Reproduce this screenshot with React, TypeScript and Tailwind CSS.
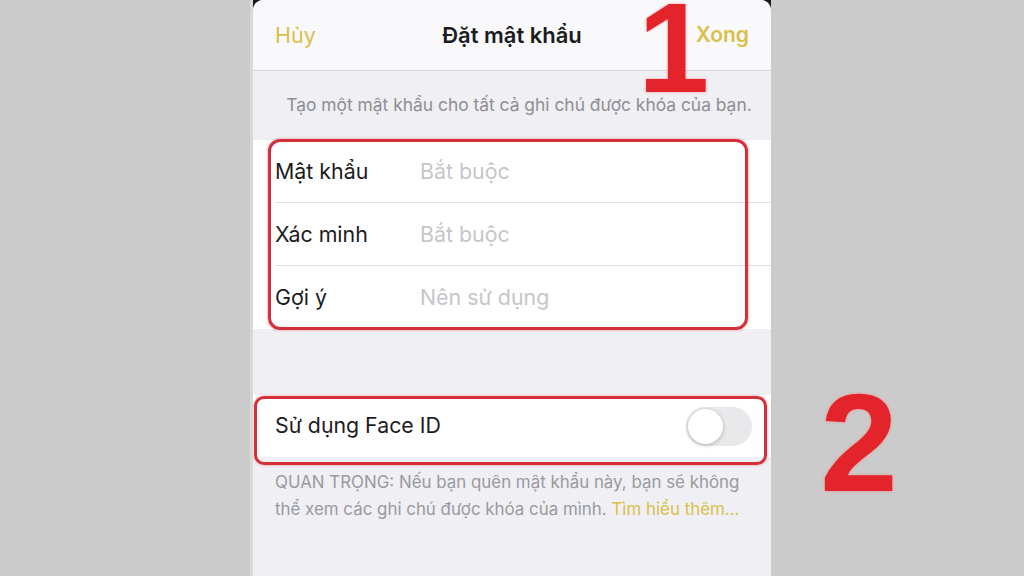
export default function App() {
  return (
    <div
      className="relative flex h-[576px] w-[1024px] overflow-hidden bg-[#cbcbcb]"
      style={{ fontFamily: 'Inter, "Noto Sans", sans-serif' }}
    >
      {/* left gray */}
      <div className="w-[250px] bg-[#cbcbcb]" />
      <div className="w-[3px] bg-[#d9d9d9]" />

      {/* phone screen */}
      <div className="w-[518px] bg-[#1a1a1a]">
        <div className="flex h-full flex-col overflow-hidden rounded-t-[10px] bg-[#efeff4]">
          {/* nav bar */}
          <div className="grid h-[71px] shrink-0 grid-cols-[1fr_auto_1fr] items-center border-b border-[#d5d5da] bg-[#f9f9fb] px-[22px]">
            <span className="text-[21.5px] text-[#d9c04a]">Hủy</span>
            <span className="text-[22px] font-semibold text-[#1c1c1e]">Đặt mật khẩu</span>
            <span className="text-right text-[21px] font-semibold text-[#d9c04a]">Xong</span>
          </div>

          {/* description */}
          <div className="flex h-[69px] shrink-0 items-center justify-center pl-[14px] text-[17.4px] text-[#8e8e93]">
            Tạo một mật khẩu cho tất cả ghi chú được khóa của bạn.
          </div>

          {/* password group */}
          <div className="relative shrink-0 bg-white">
            <Row label="Mật khẩu" placeholder="Bắt buộc" divider />
            <Row label="Xác minh" placeholder="Bắt buộc" divider />
            <Row label="Gợi ý" placeholder="Nên sử dụng" />
            <div className="absolute left-[15px] right-[23px] top-[-1px] bottom-[-1px] rounded-[12px] border-[3.5px] border-[#d3303a] shadow-[0_0_3px_rgba(230,80,90,0.6)]" />
          </div>

          <div className="h-[66px] shrink-0" />

          {/* face id */}
          <div className="relative flex h-[62px] shrink-0 items-center justify-between bg-white pl-[22px] pr-[19px]">
            <span className="text-[21.3px] text-[#1c1c1e]">Sử dụng Face ID</span>
            <div className="flex h-[39px] w-[66px] items-center rounded-full bg-[#e9e9eb] p-[2px]">
              <div className="h-[35px] w-[35px] rounded-full bg-white shadow-[0_1px_4px_rgba(0,0,0,0.25)]" />
            </div>
            <div className="absolute left-[1px] right-[4px] top-[1px] bottom-[-8px] rounded-[10px] border-[3.5px] border-[#d3303a] shadow-[0_0_3px_rgba(230,80,90,0.6)]" />
          </div>

          {/* footer */}
          <div className="px-[22px] pt-[12px] text-[16.9px] leading-[27px] text-[#9a9a9e]">
            <span className="whitespace-nowrap">QUAN TRỌNG: Nếu bạn quên mật khẩu này, bạn sẽ không</span>
            <br />
            <span className="whitespace-nowrap">
              thể xem các ghi chú được khóa của mình.{' '}
              <span className="text-[#d9c04a]">Tìm hiểu thêm...</span>
            </span>
          </div>
        </div>
      </div>

      {/* right gray */}
      <div className="flex-1 bg-[#cbcbcb]" />

      {/* annotation numbers */}
      <span
        className="absolute left-[638px] top-[-16px] text-[128px] font-bold leading-none text-[#e3242b]"
        style={{ fontFamily: '"Liberation Sans", Arial, sans-serif', textShadow: '0 0 3px rgba(255,120,120,0.7)' }}
      >
        1
      </span>
      <span
        className="absolute left-[820px] top-[373px] text-[140px] font-bold leading-none text-[#e3242b]"
        style={{ fontFamily: '"Liberation Sans", Arial, sans-serif', textShadow: '0 0 3px rgba(255,120,120,0.7)' }}
      >
        2
      </span>
    </div>
  )
}

function Row({ label, placeholder, divider }: { label: string; placeholder: string; divider?: boolean }) {
  return (
    <div className="flex h-[63px] items-stretch pl-[22px]">
      <div className={`flex flex-1 items-center ${divider ? 'border-b border-[#e0e0e4]' : ''}`}>
        <span className="w-[145px] text-[21.4px] text-[#1c1c1e]">{label}</span>
        <span className="text-[21.4px] text-[#c6c6ca]">{placeholder}</span>
      </div>
    </div>
  )
}
